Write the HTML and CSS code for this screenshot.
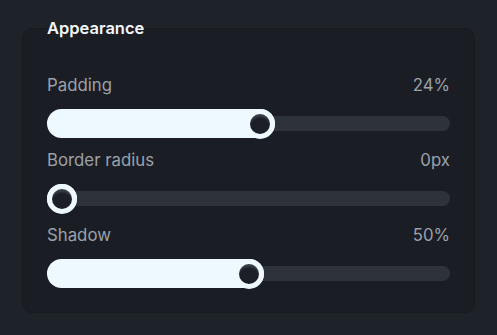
FILE: index.html
```html
<!DOCTYPE html>
<html lang="en">
<head>
    <meta charset="UTF-8">
    <meta name="viewport" content="width=device-width, initial-scale=1.0">
    <title>Appearance</title>
    <link rel="stylesheet" href="styles.css">
</head>
<body>
    <div class="panel">
        <h2 class="panel-title">Appearance</h2>

        <div class="card">
            <div class="setting">
                <div class="setting-header">
                    <span class="setting-label">Padding</span>
                    <span class="setting-value">24%</span>
                </div>
                <div class="slider">
                    <div class="slider-fill" style="width: 228px;">
                        <span class="slider-thumb"></span>
                    </div>
                </div>
            </div>

            <div class="setting">
                <div class="setting-header">
                    <span class="setting-label">Border radius</span>
                    <span class="setting-value">0px</span>
                </div>
                <div class="slider">
                    <div class="slider-fill" style="width: 30px;">
                        <span class="slider-thumb"></span>
                    </div>
                </div>
            </div>

            <div class="setting">
                <div class="setting-header">
                    <span class="setting-label">Shadow</span>
                    <span class="setting-value">50%</span>
                </div>
                <div class="slider">
                    <div class="slider-fill" style="width: 217px;">
                        <span class="slider-thumb"></span>
                    </div>
                </div>
            </div>
        </div>
    </div>
</body>
</html>
```

FILE: styles.css
```css
* {
    box-sizing: border-box;
    margin: 0;
    padding: 0;
}

body {
    font-family: Inter, "Noto Sans", sans-serif;
    background-color: #1e232a;
    color: #9aa1ab;
    padding: 17px 22px 0 22px;
}

.panel {
    width: 453px;
}

.panel-title {
    position: relative;
    z-index: 1;
    font-size: 16.5px;
    font-weight: 600;
    color: #f3f6fa;
    line-height: 22px;
    padding-left: 25px;
}

.card {
    margin-top: -11px;
    height: 285px;
    background-color: #1a1d23;
    border: 1px solid #171a1f;
    border-radius: 10px;
    padding: 45px 24px 0 24px;
}

.setting {
    margin-bottom: 11px;
}

.setting-header {
    display: flex;
    justify-content: space-between;
    align-items: center;
    font-size: 16.8px;
    line-height: 22px;
    margin-bottom: 13px;
}

.slider {
    position: relative;
    height: 29px;
    display: flex;
    align-items: center;
}

.slider::before {
    content: "";
    position: absolute;
    left: 0;
    right: 0;
    top: 7px;
    height: 15px;
    border-radius: 8px;
    background-color: #2e333b;
}

.slider-fill {
    position: relative;
    height: 29px;
    border-radius: 15px;
    background-color: #eef8ff;
    display: flex;
    justify-content: flex-end;
    align-items: center;
}

.slider-thumb {
    width: 30px;
    height: 30px;
    border-radius: 50%;
    border: 5px solid #eef8ff;
    background-color: #1c2026;
    box-shadow: inset 0 4px 2px -1px #3b4048;
    flex-shrink: 0;
}
```
